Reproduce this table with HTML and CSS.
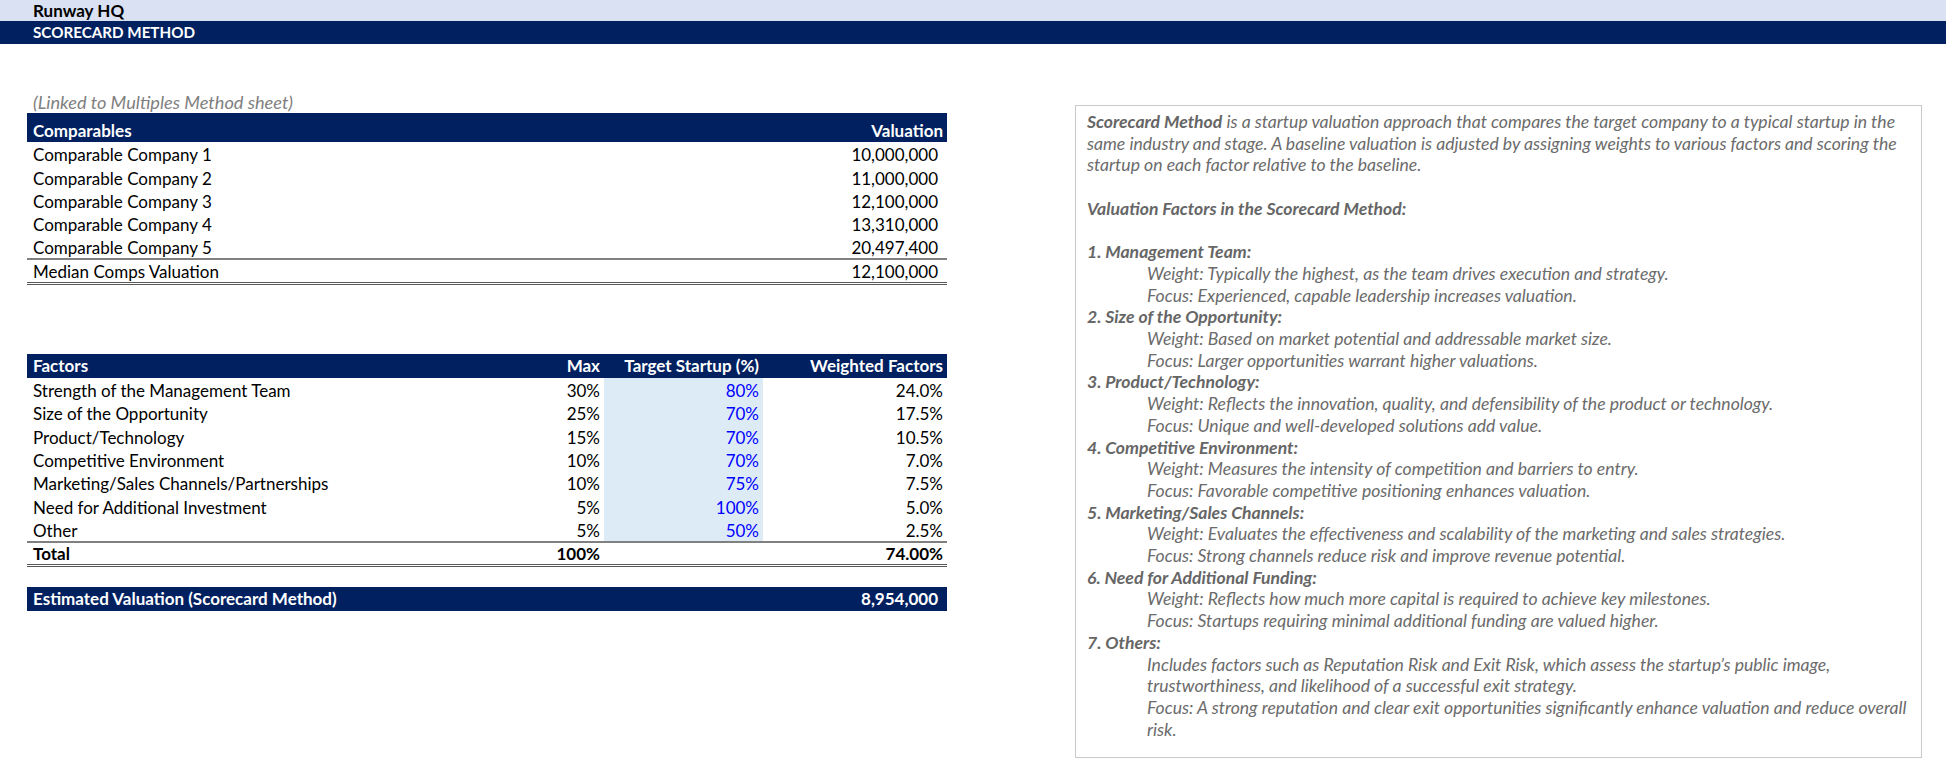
FILE: index.html
```html
<!DOCTYPE html>
<html>
<head>
<meta charset="utf-8">
<title>Scorecard Method</title>
<link rel="stylesheet" href="styles.css">
</head>
<body>
<div class="band-top">Runway HQ</div>
<div class="band-title">SCORECARD METHOD</div>
<div class="content">
  <div class="left">
    <div class="note">(Linked to Multiples Method sheet)</div>
    <table class="sheet comps">
      <colgroup><col class="c-label"><col class="c-val"></colgroup>
      <thead>
        <tr class="head tall"><th class="l">Comparables</th><th class="r">Valuation</th></tr>
      </thead>
      <tbody>
        <tr><td class="l">Comparable Company 1</td><td class="num">10,000,000</td></tr>
        <tr><td class="l">Comparable Company 2</td><td class="num">11,000,000</td></tr>
        <tr><td class="l">Comparable Company 3</td><td class="num">12,100,000</td></tr>
        <tr><td class="l">Comparable Company 4</td><td class="num">13,310,000</td></tr>
        <tr class="pre-total"><td class="l">Comparable Company 5</td><td class="num">20,497,400</td></tr>
        <tr class="total-row"><td class="l">Median Comps Valuation</td><td class="num">12,100,000</td></tr>
      </tbody>
    </table>

    <table class="sheet factors">
      <colgroup><col class="f-label"><col class="f-max"><col class="f-target"><col class="f-weight"></colgroup>
      <thead>
        <tr class="head"><th class="l">Factors</th><th class="r">Max</th><th class="r">Target Startup (%)</th><th class="r">Weighted Factors</th></tr>
      </thead>
      <tbody>
        <tr><td class="l">Strength of the Management Team</td><td class="r">30%</td><td class="r input">80%</td><td class="r">24.0%</td></tr>
        <tr><td class="l">Size of the Opportunity</td><td class="r">25%</td><td class="r input">70%</td><td class="r">17.5%</td></tr>
        <tr><td class="l">Product/Technology</td><td class="r">15%</td><td class="r input">70%</td><td class="r">10.5%</td></tr>
        <tr><td class="l">Competitive Environment</td><td class="r">10%</td><td class="r input">70%</td><td class="r">7.0%</td></tr>
        <tr><td class="l">Marketing/Sales Channels/Partnerships</td><td class="r">10%</td><td class="r input">75%</td><td class="r">7.5%</td></tr>
        <tr><td class="l">Need for Additional Investment</td><td class="r">5%</td><td class="r input">100%</td><td class="r">5.0%</td></tr>
        <tr class="pre-total"><td class="l">Other</td><td class="r">5%</td><td class="r input">50%</td><td class="r">2.5%</td></tr>
        <tr class="total-row bold"><td class="l">Total</td><td class="r">100%</td><td class="r"></td><td class="r">74.00%</td></tr>
      </tbody>
    </table>

    <div class="estimate">
      <span>Estimated Valuation (Scorecard Method)</span>
      <span class="est-val">8,954,000</span>
    </div>
  </div>

  <div class="notes-box">
    <p><b>Scorecard Method</b> is a startup valuation approach that compares the target company to a typical startup in the<br>same industry and stage. A baseline valuation is adjusted by assigning weights to various factors and scoring the<br>startup on each factor relative to the baseline.</p>
    <p class="gap"><b>Valuation Factors in the Scorecard Method:</b></p>
    <p class="gap"><b>1. Management Team:</b></p>
    <p class="ind">Weight: Typically the highest, as the team drives execution and strategy.</p>
    <p class="ind">Focus: Experienced, capable leadership increases valuation.</p>
    <p><b>2. Size of the Opportunity:</b></p>
    <p class="ind">Weight: Based on market potential and addressable market size.</p>
    <p class="ind">Focus: Larger opportunities warrant higher valuations.</p>
    <p><b>3. Product/Technology:</b></p>
    <p class="ind">Weight: Reflects the innovation, quality, and defensibility of the product or technology.</p>
    <p class="ind">Focus: Unique and well-developed solutions add value.</p>
    <p><b>4. Competitive Environment:</b></p>
    <p class="ind">Weight: Measures the intensity of competition and barriers to entry.</p>
    <p class="ind">Focus: Favorable competitive positioning enhances valuation.</p>
    <p><b>5. Marketing/Sales Channels:</b></p>
    <p class="ind">Weight: Evaluates the effectiveness and scalability of the marketing and sales strategies.</p>
    <p class="ind">Focus: Strong channels reduce risk and improve revenue potential.</p>
    <p><b>6. Need for Additional Funding:</b></p>
    <p class="ind">Weight: Reflects how much more capital is required to achieve key milestones.</p>
    <p class="ind">Focus: Startups requiring minimal additional funding are valued higher.</p>
    <p><b>7. Others:</b></p>
    <p class="ind">Includes factors such as Reputation Risk and Exit Risk, which assess the startup’s public image,<br>trustworthiness, and likelihood of a successful exit strategy.</p>
    <p class="ind">Focus: A strong reputation and clear exit opportunities significantly enhance valuation and reduce overall<br>risk.</p>
  </div>
</div>
</body>
</html>
```
FILE: styles.css
```css
html, body {
  margin: 0;
  padding: 0;
  background: #ffffff;
}
body {
  font-family: "Lato", "Liberation Sans", sans-serif;
  color: #000;
  width: 1946px;
  height: 781px;
  overflow: hidden;
}

.band-top {
  height: 21px;
  line-height: 21px;
  background: #d9e1f2;
  padding-left: 33px;
  font-weight: 700;
  font-size: 17px;
}
.band-title {
  height: 23px;
  line-height: 23px;
  background: #002060;
  color: #fff;
  padding-left: 33px;
  font-weight: 700;
  font-size: 15.2px;
}

.content {
  display: flex;
  align-items: flex-start;
}

.left {
  width: 920px;
  margin-left: 27px;
  padding-top: 48px;
  font-size: 17px;
}

.note {
  height: 21px;
  line-height: 21px;
  padding-left: 6px;
  font-style: italic;
  font-size: 18.2px;
  color: #808080;
}

.sheet {
  width: 920px;
  border-collapse: collapse;
  table-layout: fixed;
}
.sheet th, .sheet td {
  padding: 0 4px;
  height: 23.3px;
  line-height: 21px;
  white-space: nowrap;
  vertical-align: bottom;
  overflow: hidden;
}
.sheet .l { text-align: left; padding-left: 6px; }
.sheet .r { text-align: right; }
.sheet .num { text-align: right; padding-right: 9px; }

.head th {
  background: #002060;
  color: #fff;
  font-weight: 700;
}
.head.tall th {
  height: 29px;
  line-height: 22px;
}

.c-label { width: auto; }
.c-val { width: 200px; }

.pre-total td { border-bottom: 2px solid #808080; }
.sheet .total-row td {
  height: 21.3px;
  border-bottom: 3px double #595959;
}
.bold td { font-weight: 700; }

.factors { margin-top: 69px; }
.f-label { width: auto; }
.f-max { width: 117px; }
.f-target { width: 159px; }
.f-weight { width: 184px; }
.factors .head th { height: 24px; line-height: 24px; }
.factors .input {
  background: #ddebf7;
  color: #0000ff;
}

.estimate {
  margin-top: 20px;
  height: 24px;
  line-height: 24px;
  background: #002060;
  color: #fff;
  font-weight: 700;
  display: flex;
  justify-content: space-between;
  padding: 0 9px 0 6px;
}

.notes-box {
  margin-left: 128px;
  margin-top: 61px;
  width: 823px;
  height: 641px;
  border: 1px solid #c9c9c9;
  padding: 5px 11px 5px 11px;
  font-style: italic;
  font-size: 17.6px;
  line-height: 21.7px;
  color: #6b6b6b;
  white-space: nowrap;
}
.notes-box p { margin: 0; }
.notes-box b { font-weight: 700; color: #666; }
.notes-box .gap { margin-top: 21.7px; }
.notes-box .ind { padding-left: 60px; }
```
